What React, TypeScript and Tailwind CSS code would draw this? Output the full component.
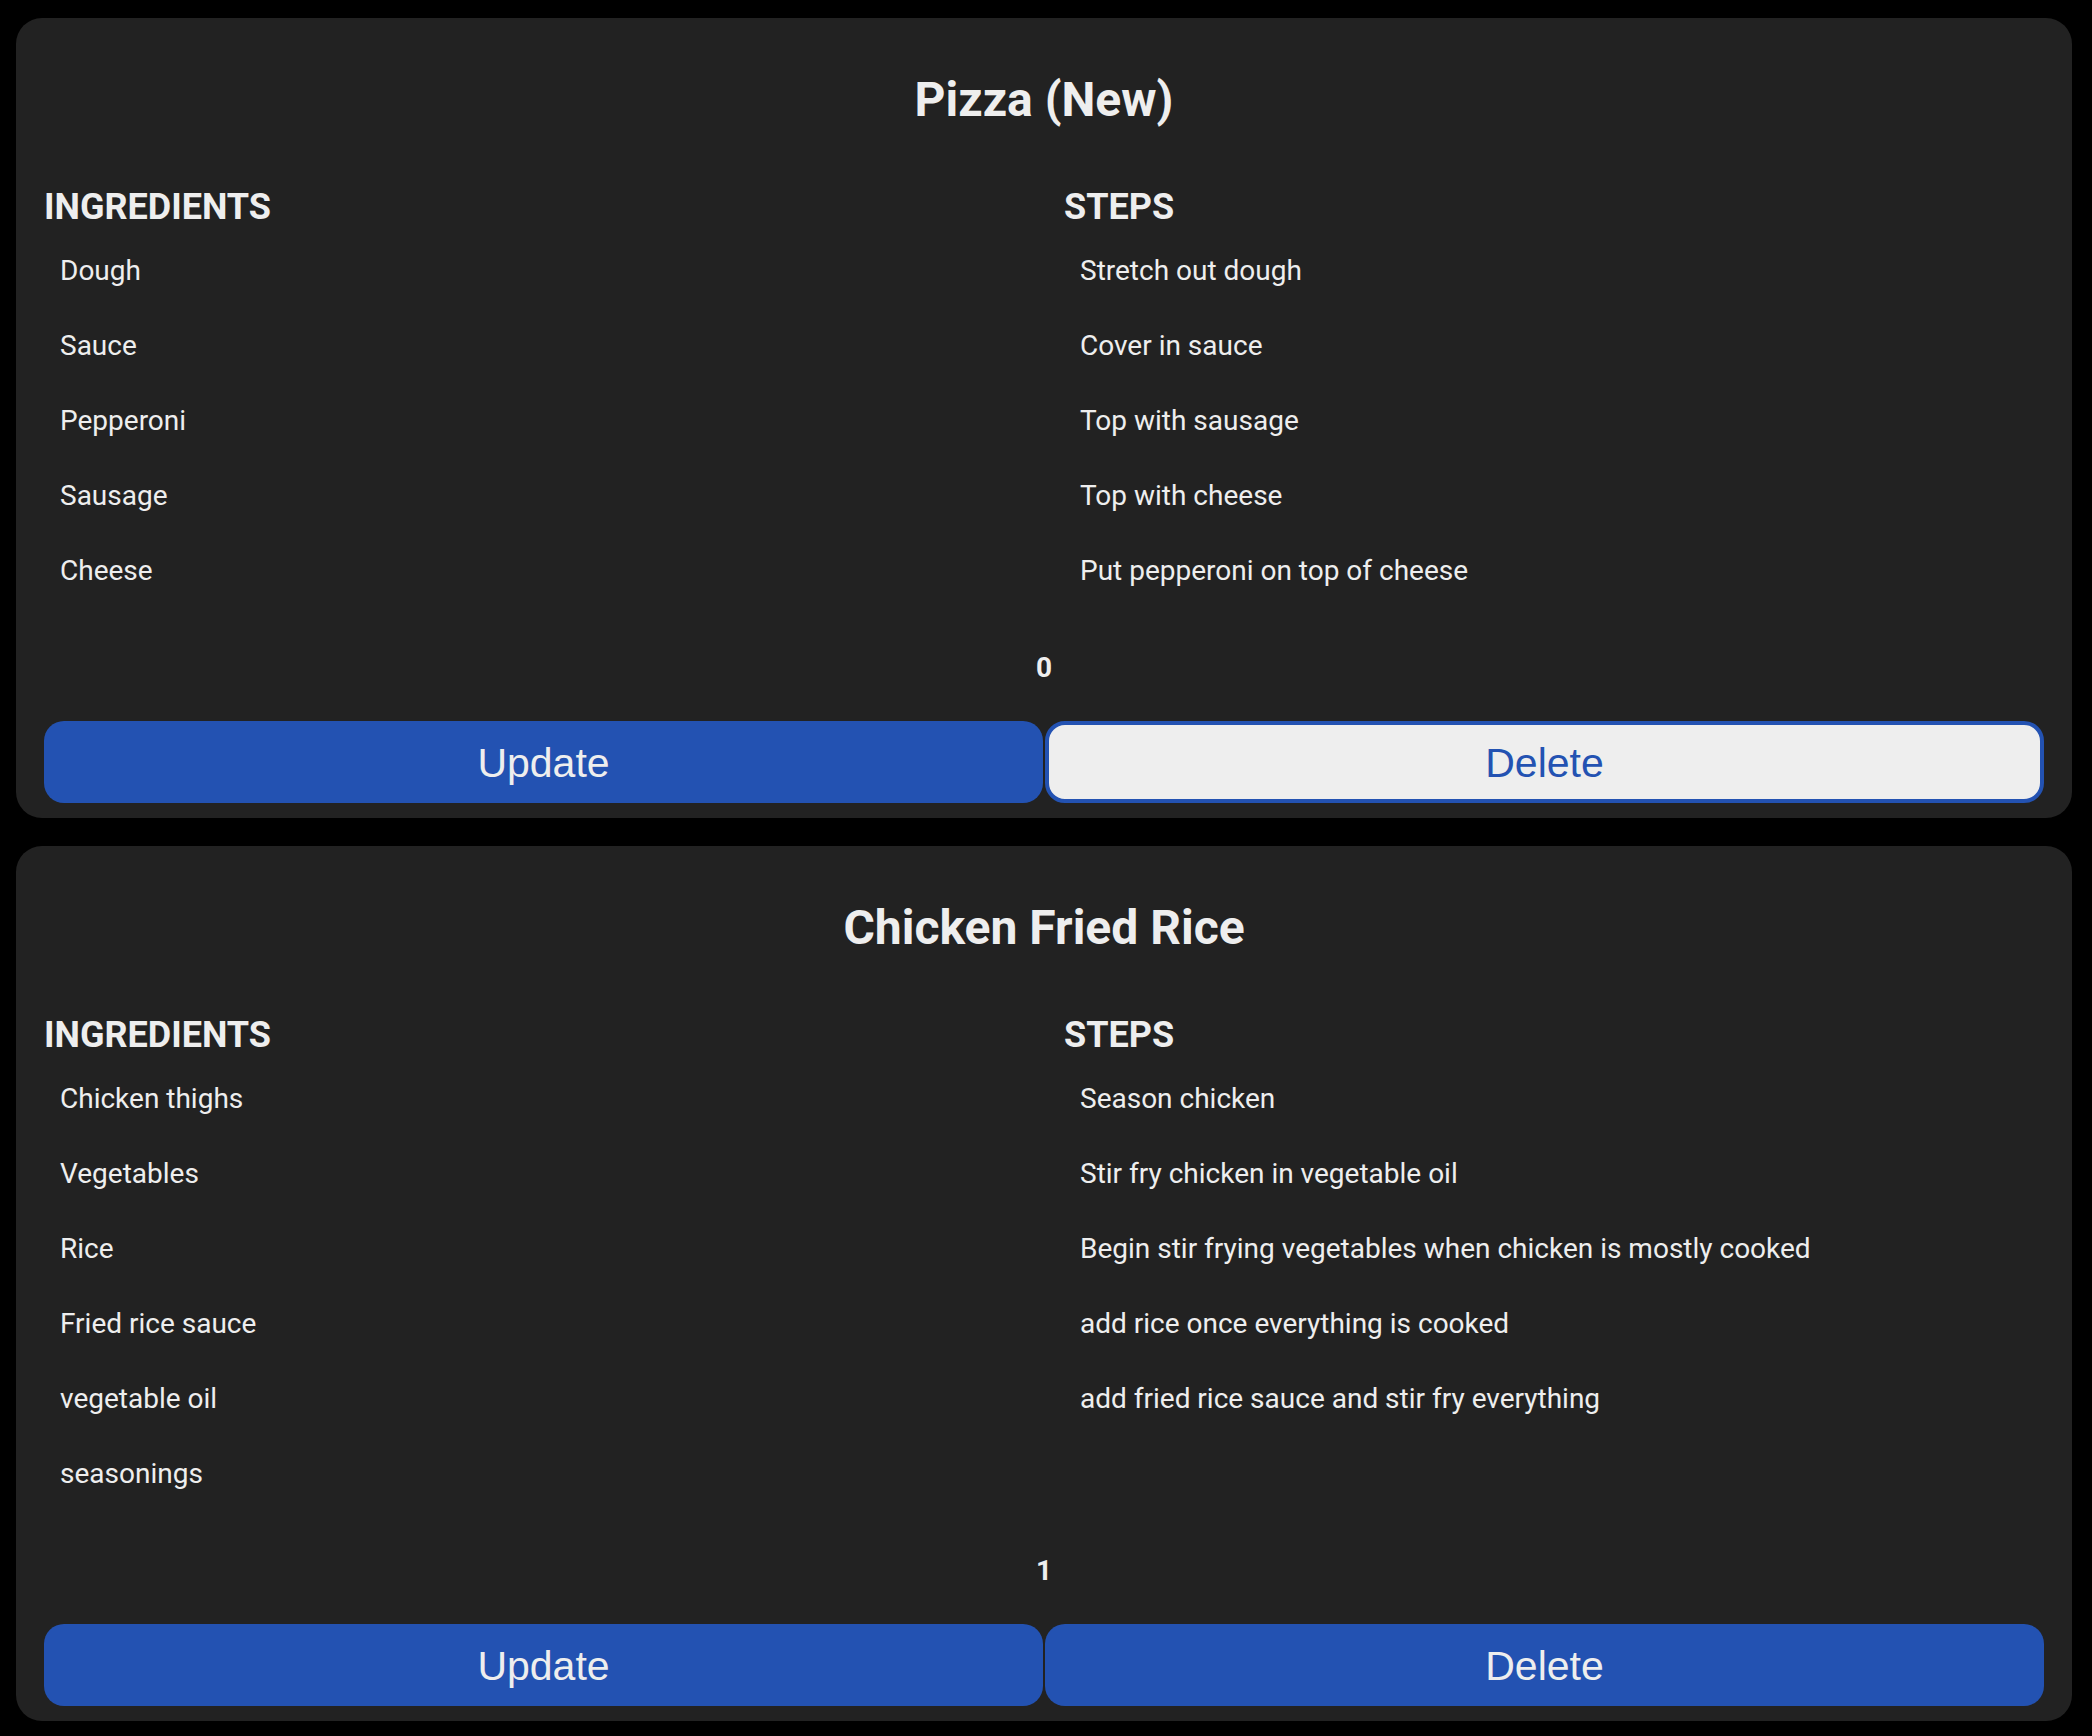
import { useState } from 'react';

type Recipe = {
  id: number;
  name: string;
  ingredients: string[];
  steps: string[];
};

const initialRecipes: Recipe[] = [
  {
    id: 0,
    name: 'Pizza (New)',
    ingredients: ['Dough', 'Sauce', 'Pepperoni', 'Sausage', 'Cheese'],
    steps: [
      'Stretch out dough',
      'Cover in sauce',
      'Top with sausage',
      'Top with cheese',
      'Put pepperoni on top of cheese',
    ],
  },
  {
    id: 1,
    name: 'Chicken Fried Rice',
    ingredients: ['Chicken thighs', 'Vegetables', 'Rice', 'Fried rice sauce', 'vegetable oil', 'seasonings'],
    steps: [
      'Season chicken',
      'Stir fry chicken in vegetable oil',
      'Begin stir frying vegetables when chicken is mostly cooked',
      'add rice once everything is cooked',
      'add fried rice sauce and stir fry everything',
    ],
  },
];

function ItemList({ title, items }: { title: string; items: string[] }) {
  return (
    <div>
      <h2 className="text-[36px] leading-[42px] font-bold">{title}</h2>
      <ul className="mt-[26px] pl-4 flex flex-col gap-[42px]">
        {items.map((item, i) => (
          <li key={i} className="text-[28px] leading-[33px]">
            {item}
          </li>
        ))}
      </ul>
    </div>
  );
}

function RecipeCard({
  recipe,
  selected,
  onDelete,
  onSelect,
}: {
  recipe: Recipe;
  selected: boolean;
  onDelete: (id: number) => void;
  onSelect: (id: number) => void;
}) {
  return (
    <div className="bg-[#222222] rounded-[26px] pt-[54px] pb-[15px] px-[28px] text-[#eeeeee]">
      <h1 className="text-[48px] leading-[56px] font-bold text-center">{recipe.name}</h1>

      <div className="mt-[58px] grid grid-cols-[1020px_1fr] items-start">
        <ItemList title="INGREDIENTS" items={recipe.ingredients} />
        <ItemList title="STEPS" items={recipe.steps} />
      </div>

      <p className="mt-[64px] text-[28px] leading-[33px] font-bold text-center">{recipe.id}</p>

      <div className="mt-[37px] grid grid-cols-2 gap-[2px]">
        <button
          onClick={() => onSelect(recipe.id)}
          className="h-[82px] pt-[4px] rounded-[20px] bg-[#2352b2] text-[#eeeeee] text-[41px] font-['Liberation_Sans',Arial,sans-serif]"
        >
          Update
        </button>
        <button
          onClick={() => onDelete(recipe.id)}
          className={
            selected
              ? "h-[82px] pt-[4px] rounded-[20px] border-[4px] border-[#2352b2] bg-[#eeeeee] text-[#2352b2] text-[41px] font-['Liberation_Sans',Arial,sans-serif]"
              : "h-[82px] pt-[4px] rounded-[20px] bg-[#2352b2] text-[#eeeeee] text-[41px] font-['Liberation_Sans',Arial,sans-serif]"
          }
        >
          Delete
        </button>
      </div>
    </div>
  );
}

export default function App() {
  const [recipes, setRecipes] = useState<Recipe[]>(initialRecipes);
  const [selectedId, setSelectedId] = useState<number>(0);

  const deleteRecipe = (id: number) => {
    setRecipes(prev => prev.filter(r => r.id !== id));
  };

  return (
    <div className="min-h-screen bg-black pl-4 pr-5 pt-[18px] pb-[17px] font-['Roboto','Noto_Sans',sans-serif]">
      <div className="flex flex-col gap-[28px]">
        {recipes.map(recipe => (
          <RecipeCard
            key={recipe.id}
            recipe={recipe}
            selected={selectedId === recipe.id}
            onDelete={deleteRecipe}
            onSelect={setSelectedId}
          />
        ))}
      </div>
    </div>
  );
}
